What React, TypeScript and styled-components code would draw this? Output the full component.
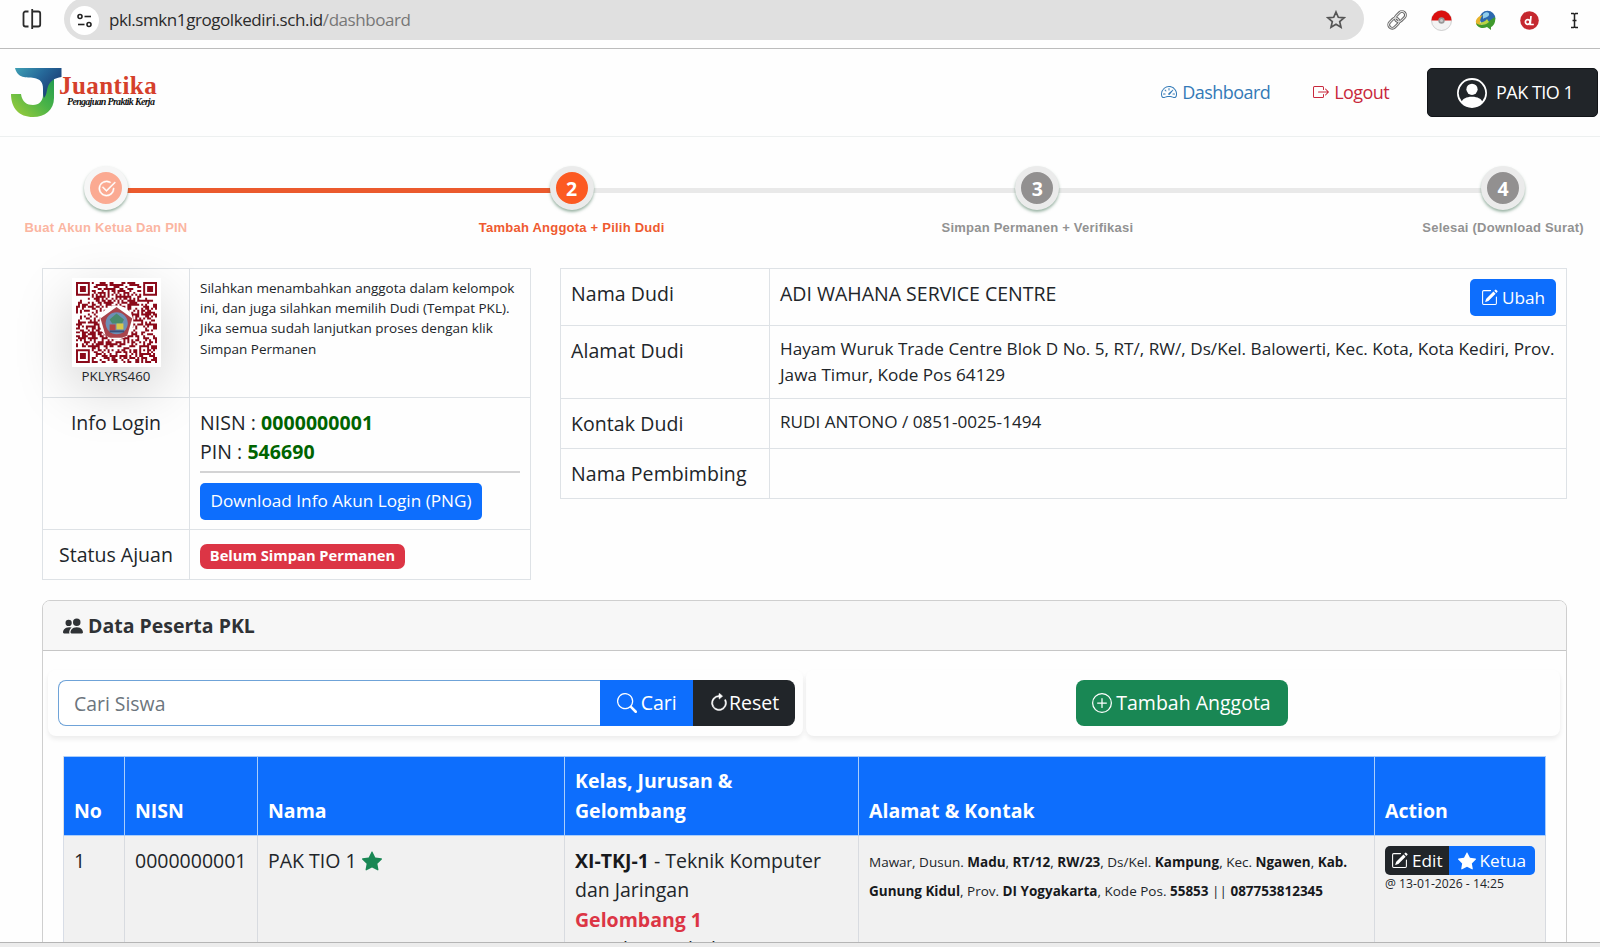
import React from 'react';
import styled, { createGlobalStyle, css } from 'styled-components';
import {
  BsSpeedometer2, BsBoxArrowRight, BsPersonCircle, BsPencilSquare, BsPeopleFill,
  BsSearch, BsArrowClockwise, BsPlusCircle, BsStarFill, BsCheck2Circle,
} from 'react-icons/bs';

const Global = createGlobalStyle`
  *, *::before, *::after { box-sizing: border-box; }
  body {
    margin: 0;
    background: #fefefe;
    color: #212529;
    font: 400 19.5px/29.3px "Open Sans", "Noto Sans", sans-serif;
    overflow: hidden;
  }
  svg { flex: none; display: block; }
`;

const Page = styled.div`
  width: 1600px;
  height: 947px;
  display: flex;
  flex-direction: column;
  overflow: hidden;
`;
const Viewport = styled.main`
  flex: 1;
  min-height: 0;
  overflow: hidden;
`;
const BottomEdge = styled.div`
  height: 5px;
  flex: none;
  background: #ececec;
  border-top: 1px solid #b5b5b5;
`;

/* Browser toolbar */
const BrowserBar = styled.div`
  height: 49px;
  flex: none;
  display: flex;
  align-items: flex-start;
  border-bottom: 1px solid #bcbcbc;
  overflow: hidden;
`;
const SplitSlot = styled.div`
  width: 64px;
  padding: 8px 0 0 22px;
`;
const UrlPill = styled.div`
  width: 1300px;
  height: 42px;
  margin-top: -2px;
  padding: 2px 18px 0 6px;
  display: flex;
  align-items: center;
  border-radius: 21px;
  background: #e0e0e0;
`;
const SiteBadge = styled.span`
  width: 29px;
  height: 29px;
  border-radius: 50%;
  background: #fff;
  display: grid;
  place-items: center;
`;
const Url = styled.span`
  flex: 1;
  margin-left: 10px;
  font: 17px/24px "Open Sans", sans-serif;
  letter-spacing: -0.43px;
  color: #2b2b2b;
  white-space: nowrap;
`;
const UrlPath = styled.span`
  color: #777;
`;
const Extensions = styled.div`
  height: 40px;
  padding-left: 22px;
  display: grid;
  grid-template-columns: repeat(5, 22px);
  gap: 22.3px;
  align-items: center;
  justify-items: center;
`;

/* Site header */
const Header = styled.header`
  height: 88px;
  padding: 0 2px 0 10px;
  display: flex;
  align-items: center;
  border-bottom: 1px solid #edf0f0;
`;
const Logo = styled.div`
  display: flex;
  align-items: flex-start;
  height: 51px;
  margin-right: auto;
`;
const LogoWords = styled.div`
  display: flex;
  flex-direction: column;
  margin-left: -5px;
  padding-top: 8px;
`;
const LogoName = styled.span`
  font: 700 25px/21px "Liberation Serif", serif;
  letter-spacing: 0.45px;
  color: #d5402b;
`;
const LogoTag = styled.span`
  margin-left: 8px;
  font: italic 700 10px/11px "Liberation Serif", serif;
  letter-spacing: -0.7px;
  color: #111;
  white-space: nowrap;
`;
const NavLink = styled.a<{ $color: string; $after: number }>`
  display: flex;
  align-items: center;
  gap: 5px;
  margin-right: ${p => p.$after}px;
  color: ${p => p.$color};
  font-size: 18px;
  letter-spacing: -0.57px;
`;
const UserButton = styled.button`
  width: 171px;
  height: 49px;
  padding: 0 0 0 29px;
  display: flex;
  align-items: center;
  gap: 9px;
  border: 1px solid #111418;
  border-radius: 5px;
  background: #212529;
  color: #fff;
  font: 18px/27px "Open Sans", sans-serif;
  letter-spacing: -0.5px;
  white-space: nowrap;
`;

/* Progress steps */
const Stepper = styled.ol`
  list-style: none;
  margin: 0;
  padding: 29px 0 0 6px;
  height: 131px;
  display: flex;
  align-items: flex-start;
`;
const Step = styled.li`
  flex: none;
  width: 200px;
  display: flex;
  flex-direction: column;
  align-items: center;
  z-index: 1;
`;
const StepCircle = styled.span<{ $color: string; $ring: string }>`
  width: 44px;
  height: 44px;
  border: 6.5px solid ${p => p.$ring};
  border-radius: 50%;
  background: ${p => p.$color};
  box-shadow: 0 2px 3px rgba(60, 110, 80, 0.5);
  color: #fff;
  display: grid;
  place-items: center;
  font: 700 19.5px/31px "Open Sans", sans-serif;
`;
const StepLabel = styled.span<{ $color: string }>`
  margin-top: 8px;
  color: ${p => p.$color};
  font: 700 13px/20px "Liberation Sans", Arial, sans-serif;
  letter-spacing: 0.23px;
  white-space: nowrap;
`;
const StepLine = styled.li<{ $done?: boolean }>`
  flex: none;
  width: 423.7px;
  height: 5px;
  margin: 22px -79px 0;
  background: ${p => (p.$done ? '#eb5a2d' : '#e9e9e9')};
`;

/* Information tables */
const InfoRow = styled.section`
  display: flex;
  align-items: flex-start;
  gap: 29px;
  padding: 0 33px 0 42px;
  height: 332px;
`;
const InfoTable = styled.div<{ $cols: string; $rows: string; $width: number }>`
  width: ${p => p.$width}px;
  display: grid;
  grid-template-columns: ${p => p.$cols};
  grid-template-rows: ${p => p.$rows};
  border: 1px solid #dee2e6;
  border-width: 1px 0 0 1px;
`;
const Cell = styled.div<{ $center?: boolean; $spacing?: number; $size?: number; $line?: number; $top?: number }>`
  border: 1px solid #dee2e6;
  border-width: 0 1px 1px 0;
  padding: ${p => p.$top ?? 10}px 10px 0;
  text-align: ${p => (p.$center ? 'center' : 'left')};
  letter-spacing: ${p => p.$spacing ?? 0}px;
  font-size: ${p => p.$size ?? 19.5}px;
  line-height: ${p => p.$line ?? 29.3}px;
  white-space: nowrap;
`;
const QrCell = styled(Cell)`
  display: flex;
  flex-direction: column;
  align-items: center;
  padding-top: 9px;
  font-size: 13.3px;
  line-height: 19px;
`;
const QrFrame = styled.span`
  padding: 4px;
  background: #fff;
  box-shadow: 0 20px 58px rgba(0, 0, 0, 0.18);
`;
const ValueCell = styled(Cell)`
  background: #fefefe;
  position: relative;
`;
const Green = styled.b`
  color: #006400;
`;
const Rule = styled.hr`
  margin: 4px 0 10px;
  border: 0;
  height: 2px;
  background: #d3d3d4;
`;
const Button = styled.button<{ $bg: string }>`
  display: inline-flex;
  align-items: center;
  justify-content: center;
  border: 0;
  padding: 0;
  border-radius: 5px;
  background: ${p => p.$bg};
  color: #fff;
  font: 17.2px/26px "Open Sans", sans-serif;
  white-space: nowrap;
`;
const DownloadButton = styled(Button)`
  width: 282px;
  height: 37px;
  display: flex;
`;
const EditDudiButton = styled(Button)`
  width: 86px;
  height: 37px;
  gap: 4px;
`;
const StatusBadge = styled.span`
  display: flex;
  align-items: center;
  justify-content: center;
  width: 205px;
  height: 25px;
  padding-bottom: 2px;
  border-radius: 7px;
  background: #dc3545;
  color: #fff;
  font: 700 14.7px/23px "Open Sans", sans-serif;
`;
const DudiName = styled(Cell)`
  display: flex;
  align-items: flex-start;
  justify-content: space-between;
`;

/* Participant card */
const Card = styled.section`
  margin: 0 33px 0 42px;
  height: 420px;
  border: 1px solid #cfcfcf;
  border-radius: 8px 8px 0 0;
`;
const CardTitle = styled.h2`
  height: 50px;
  margin: 0;
  padding-left: 20px;
  display: flex;
  align-items: center;
  gap: 5px;
  border-bottom: 1px solid #c6c6c6;
  border-radius: 7px 7px 0 0;
  background: #f7f7f7;
  color: #2f3235;
  font: 700 19.5px/29px "Open Sans", sans-serif;
`;
const Tools = styled.div`
  display: grid;
  grid-template-columns: 755px 754px;
  gap: 3px;
  padding: 19px 5px 0;
`;
const ToolPanel = styled.div<{ $center?: boolean }>`
  height: 66px;
  padding: ${p => (p.$center ? '10px 11px 10px 8px' : '10px 8px 10px 10px')};
  display: flex;
  justify-content: ${p => (p.$center ? 'center' : 'flex-start')};
  border-radius: 8px;
  box-shadow: 0 3px 5px rgba(0, 0, 0, 0.075);
`;
const SearchInput = styled.input`
  width: 543px;
  height: 46px;
  padding: 0 15px;
  border: 1px solid #6fa3d8;
  border-right: 0;
  border-radius: 8px 0 0 8px;
  background: #fff;
  font: 19.4px/28px "Open Sans", sans-serif;
  outline: none;
  &::placeholder { color: #6c757d; opacity: 1; }
`;
const ToolButton = styled(Button)<{ $width: number; $gap: number; $radius: string }>`
  width: ${p => p.$width}px;
  height: 46px;
  gap: ${p => p.$gap}px;
  border-radius: ${p => p.$radius};
  font-size: 19.5px;
`;

const Table = styled.div`
  margin: 20px 0 0 20px;
  width: 1483px;
  display: grid;
  grid-template-columns: 61px 133px 307px 294px 516px 171px;
  grid-template-rows: 80px 200px;
  border-left: 1px solid #d8dde6;
`;
const HeadCell = styled.div`
  display: flex;
  align-items: flex-end;
  padding: 0 10px 10px;
  border: 1px solid #a9cdfb;
  border-left: 0;
  background: #0d6efd;
  color: #fff;
  font-weight: 700;
  font-size: 19.5px;
`;
const BodyCell = styled.div<{ $small?: boolean }>`
  padding: ${p => (p.$small ? 12 : 10)}px 10px 0;
  border-right: 1px solid #d8dbe0;
  background: #f1f1f1;
  white-space: nowrap;
  ${p => p.$small && css`font-size: 13.5px;`}
`;
const NameCell = styled(BodyCell)`
  display: flex;
  gap: 5px;
`;
const NameStar = styled.span`
  padding-top: 5px;
  color: #198754;
`;
const Batch = styled.b`
  color: #dc3545;
  font-weight: 700;
`;
const Strong = styled.b`
  font-weight: 700;
  color: #17191c;
`;
const ButtonGroup = styled.div`
  display: flex;
`;
const GroupButton = styled(Button)<{ $width: number; $radius: string; $gap: number }>`
  width: ${p => p.$width}px;
  height: 29px;
  gap: ${p => p.$gap}px;
  border-radius: ${p => p.$radius};
`;
const Timestamp = styled.div`
  font-size: 12.2px;
  line-height: 18px;
`;

const N = 41;
const isDark = (x: number, y: number): boolean => {
  const finder = (cx: number, cy: number) => {
    const d = Math.max(Math.abs(x - cx), Math.abs(y - cy));
    return d > 4 ? null : d === 3 || d <= 1;
  };
  for (const [cx, cy] of [[3, 3], [N - 4, 3], [3, N - 4]]) {
    const f = finder(cx, cy);
    if (f !== null) return f;
  }
  const a = Math.max(Math.abs(x - 34), Math.abs(y - 34));
  if (a <= 2) return a !== 1;
  if (x === 6 || y === 6) return (x + y) % 2 === 0;
  const h = Math.imul(x * 73856093 ^ y * 19349663, 0x45d9f3b);
  return (((h ^ (h >>> 15)) >>> 3) & 1) === 1;
};
const qrPath = (() => {
  let d = '';
  for (let y = 0; y < N; y++) for (let x = 0; x < N; x++) if (isDark(x, y)) d += `M${x} ${y}h1v1h-1z`;
  return d;
})();

const QrCode = () => (
  <svg width="81" height="81" viewBox="0 0 41 41">
    <path d={qrPath} fill="#8b0a1a" />
    <circle cx="20.5" cy="20.5" r="8.6" fill="#fff" />
    <path d="M20.5 12.6l8 5.900-2.600 8.700-2.500 1h-6l-2.400-1-2.600-8.700z" fill="#a8444c" />
    <circle cx="20.6" cy="20.9" r="5.600" fill="#6c8fb5" />
    <path d="M17 19l3.500-3 3.800 3-1 2h-5z" fill="#4a8a6c" />
    <path d="M17 21.500h3v3h-3z" fill="#b54545" />
    <path d="M20.500 21h3.500v3h-3.500z" fill="#d8c94a" />
    <path d="M17 25h7.400" stroke="#39507c" strokeWidth="1" />
  </svg>
);

const LogoMark = () => (
  <svg width="54" height="51" viewBox="0 0 54 51">
    <defs>
      <linearGradient id="leaf" x1="0" y1="1" x2="1" y2="0">
        <stop offset="0" stopColor="#a5cf3a" />
        <stop offset="0.55" stopColor="#49b348" />
        <stop offset="1" stopColor="#1f9a50" />
      </linearGradient>
      <linearGradient id="wave" x1="0" y1="0" x2="1" y2="0.6">
        <stop offset="0" stopColor="#3fa0b4" />
        <stop offset="0.5" stopColor="#26699a" />
        <stop offset="1" stopColor="#1b3a72" />
      </linearGradient>
    </defs>
    <path d="M1 27h10c1 8 6 11 12 11 6 0 10-4 10-10V17l11-8v22c0 12-9 19-21 19C9 50 1 41 1 27z" fill="url(#leaf)" />
    <path d="M5 1h46.500v9c-7 1-12 4-14 11-1 4-1 7-3.500 10-1-3-1-5-1-9 0-7-3-10-9-11-8-1-16 1-19-10z" fill="url(#wave)" />
  </svg>
);

const SplitIcon = () => (
  <svg width="20" height="22" viewBox="0 0 20 22" fill="none" stroke="#2b2b2b" strokeWidth="1.800">
    <path d="M6.500 3.500H3.500a2 2 0 0 0-2 2v11a2 2 0 0 0 2 2h3" />
    <path d="M10.200 1v20M10.200 3.500h6a2 2 0 0 1 2 2v11a2 2 0 0 1-2 2h-6" />
  </svg>
);
const TuneIcon = () => (
  <svg width="17" height="15" viewBox="0 0 17 15" fill="none" stroke="#222" strokeWidth="1.600">
    <circle cx="4" cy="3.500" r="2" /><path d="M8.500 3.500H15" />
    <circle cx="13" cy="11.500" r="2" /><path d="M2 11.500h6.500" />
  </svg>
);
const BookmarkStar = () => (
  <svg width="20" height="20" viewBox="0 0 20 20" fill="none" stroke="#555" strokeWidth="1.700">
    <path d="M10 2l2.300 5.300 5.700.5-4.300 3.800 1.300 5.700-5-3-5 3 1.300-5.700L2 7.800l5.700-.5z" />
  </svg>
);
const ChainIcon = () => (
  <svg width="22" height="22" viewBox="0 0 22 22" fill="none">
    <g stroke="#5c5c5c" strokeWidth="2.800" transform="rotate(-45 11 11)">
      <rect x="0.800" y="7.500" width="11.500" height="7" rx="3.500" /><rect x="10" y="7.500" width="11.500" height="7" rx="3.500" />
    </g>
    <g stroke="#e2e2e2" strokeWidth="1.100" transform="rotate(-45 11 11)">
      <rect x="0.800" y="7.500" width="11.500" height="7" rx="3.500" /><rect x="10" y="7.500" width="11.500" height="7" rx="3.500" />
    </g>
  </svg>
);
const BallIcon = () => (
  <svg width="21" height="21" viewBox="0 0 21 21">
    <circle cx="10.500" cy="10.500" r="10" fill="#f3f3f3" stroke="#bbb" strokeWidth="0.700" />
    <path d="M.5 10.500a10 10 0 0 1 20 0z" fill="#d9100f" />
    <circle cx="10.500" cy="10.500" r="3.200" fill="#999" /><circle cx="10.500" cy="10.500" r="1.500" fill="#ccc" />
  </svg>
);
const GlobeIcon = () => (
  <svg width="21" height="21" viewBox="0 0 21 21">
    <circle cx="12.500" cy="8.500" r="7.800" fill="#2c68ae" />
    <path d="M8 4c3-3 7-2 6 1s-5 2-6 4z" fill="#8fcdec" />
    <path d="M8 5C2 6-1 12 2 15c2 2 7 2 11 0-5 1-8 0-8-3s1-5 3-7z" fill="#e8b32c" />
    <path d="M1 13c3 3 9 2 13-2l6-4c1 4-1 9-4 10v3l-4-3c-4 2-10 1-11-4z" fill="#3f9a2c" />
    <path d="M3 12c3 1 7 0 9-3l2 3c-3 3-8 4-11 0z" fill="#b9d445" />
  </svg>
);
const DiscIcon = () => (
  <svg width="19" height="19" viewBox="0 0 19 19" fill="none">
    <circle cx="9.500" cy="9.500" r="9.300" fill="#c5282f" />
    <circle cx="7.700" cy="11" r="2.300" stroke="#fff" strokeWidth="1.700" />
    <path d="M11 5l-.8 8.500h3.600" stroke="#fff" strokeWidth="1.700" />
  </svg>
);
const CursorIcon = () => (
  <svg width="9" height="17" viewBox="0 0 9 17" fill="none" stroke="#222" strokeWidth="1.500">
    <path d="M1 1.500h2.500l1 1 1-1H8M4.500 2v13M1 15.500h2.500l1-1 1 1H8M2.500 8.500h4" />
  </svg>
);

const Address = () => (
  <>
    Mawar, Dusun. <Strong>Madu</Strong>, <Strong>RT/12</Strong>, <Strong>RW/23</Strong>, Ds/Kel. <Strong>Kampung</Strong>, Kec.{' '}
    <Strong>Ngawen</Strong>, <Strong>Kab.</Strong><br />
    <Strong>Gunung Kidul</Strong>, Prov. <Strong>DI Yogyakarta</Strong>, Kode Pos. <Strong>55853</Strong> || <Strong>087753812345</Strong>
  </>
);

export default function App() {
  return (
    <Page>
      <Global />
      <BrowserBar>
        <SplitSlot><SplitIcon /></SplitSlot>
        <UrlPill>
          <SiteBadge><TuneIcon /></SiteBadge>
          <Url>pkl.smkn1grogolkediri.sch.id<UrlPath>/dashboard</UrlPath></Url>
          <BookmarkStar />
        </UrlPill>
        <Extensions>
          <ChainIcon /><BallIcon /><GlobeIcon /><DiscIcon /><CursorIcon />
        </Extensions>
      </BrowserBar>
      <Viewport>
        <Header>
          <Logo>
            <LogoMark />
            <LogoWords>
              <LogoName>Juantika</LogoName>
              <LogoTag>Pengajuan Praktik Kerja</LogoTag>
            </LogoWords>
          </Logo>
          <NavLink $color="#337ab7" $after={43}><BsSpeedometer2 size={16} />Dashboard</NavLink>
          <NavLink $color="#c8283c" $after={38}><BsBoxArrowRight size={16} />Logout</NavLink>
          <UserButton><BsPersonCircle size={30} />PAK TIO 1</UserButton>
        </Header>
        <Stepper>
          <Step>
            <StepCircle $color="#fbaa92" $ring="#f6f6f6"><BsCheck2Circle size={19} stroke="#fff" strokeWidth={0.4} /></StepCircle>
            <StepLabel $color="#fbb5a1">Buat Akun Ketua Dan PIN</StepLabel>
          </Step>
          <StepLine $done />
          <Step>
            <StepCircle $color="#fc5a22" $ring="#ebebeb">2</StepCircle>
            <StepLabel $color="#ef5a30">Tambah Anggota + Pilih Dudi</StepLabel>
          </Step>
          <StepLine />
          <Step>
            <StepCircle $color="#929090" $ring="#ebebeb">3</StepCircle>
            <StepLabel $color="#929292">Simpan Permanen + Verifikasi</StepLabel>
          </Step>
          <StepLine />
          <Step>
            <StepCircle $color="#929090" $ring="#ebebeb">4</StepCircle>
            <StepLabel $color="#929292">Selesai (Download Surat)</StepLabel>
          </Step>
        </Stepper>
        <InfoRow>
          <InfoTable $width={489} $cols="147px 341px" $rows="129px 132px 50px">
            <QrCell><QrFrame><QrCode /></QrFrame>PKLYRS460</QrCell>
            <ValueCell $size={13.5} $line={20.2} $top={9}>
              Silahkan menambahkan anggota dalam kelompok<br />
              ini, dan juga silahkan memilih Dudi (Tempat PKL).<br />
              Jika semua sudah lanjutkan proses dengan klik<br />
              Simpan Permanen
            </ValueCell>
            <Cell $center>Info Login</Cell>
            <ValueCell $spacing={0.05}>
              NISN : <Green>0000000001</Green><br />PIN : <Green>546690</Green>
              <Rule />
              <DownloadButton $bg="#0d6efd">Download Info Akun Login (PNG)</DownloadButton>
            </ValueCell>
            <Cell $center>Status Ajuan</Cell>
            <ValueCell $top={14}><StatusBadge>Belum Simpan Permanen</StatusBadge></ValueCell>
          </InfoTable>
          <InfoTable $width={1007} $cols="209px 797px" $rows="57px 73px 50px 50px">
            <Cell $spacing={0.07}>Nama Dudi</Cell>
            <DudiName>
              ADI WAHANA SERVICE CENTRE
              <EditDudiButton $bg="#0d6efd"><BsPencilSquare size={17} />Ubah</EditDudiButton>
            </DudiName>
            <Cell $spacing={0.07}>Alamat Dudi</Cell>
            <Cell $size={17.15} $line={26.4}>
              Hayam Wuruk Trade Centre Blok D No. 5, RT/, RW/, Ds/Kel. Balowerti, Kec. Kota, Kota Kediri, Prov.<br />
              Jawa Timur, Kode Pos 64129
            </Cell>
            <Cell $spacing={0.07}>Kontak Dudi</Cell>
            <Cell $size={17.15} $line={26.4}>RUDI ANTONO / 0851-0025-1494</Cell>
            <Cell $spacing={0.07}>Nama Pembimbing</Cell>
            <Cell />
          </InfoTable>
        </InfoRow>
        <Card>
          <CardTitle><BsPeopleFill size={20} />Data Peserta PKL</CardTitle>
          <Tools>
            <ToolPanel>
              <SearchInput placeholder="Cari Siswa" />
              <ToolButton $bg="#0d6efd" $width={93} $gap={4} $radius="0"><BsSearch size={20} />Cari</ToolButton>
              <ToolButton $bg="#212529" $width={102} $gap={0} $radius="0 8px 8px 0">
                <BsArrowClockwise size={20} stroke="#fff" strokeWidth={0.4} />Reset
              </ToolButton>
            </ToolPanel>
            <ToolPanel $center>
              <ToolButton $bg="#198754" $width={212} $gap={4} $radius="8px"><BsPlusCircle size={20} />Tambah Anggota</ToolButton>
            </ToolPanel>
          </Tools>
          <Table>
            <HeadCell>No</HeadCell>
            <HeadCell>NISN</HeadCell>
            <HeadCell>Nama</HeadCell>
            <HeadCell>Kelas, Jurusan &amp;<br />Gelombang</HeadCell>
            <HeadCell>Alamat &amp; Kontak</HeadCell>
            <HeadCell>Action</HeadCell>
            <BodyCell>1</BodyCell>
            <BodyCell>0000000001</BodyCell>
            <NameCell>PAK TIO 1<NameStar><BsStarFill size={20} /></NameStar></NameCell>
            <BodyCell>
              <Strong>XI-TKJ-1</Strong> - Teknik Komputer<br />dan Jaringan<br /><Batch>Gelombang 1</Batch><br />Gemilang Tabel
            </BodyCell>
            <BodyCell $small><Address /></BodyCell>
            <BodyCell>
              <ButtonGroup>
                <GroupButton $bg="#212529" $width={64} $gap={4} $radius="5px 0 0 5px"><BsPencilSquare size={17} />Edit</GroupButton>
                <GroupButton $bg="#0d6efd" $width={87} $gap={4} $radius="0 5px 5px 0"><BsStarFill size={18} />Ketua</GroupButton>
              </ButtonGroup>
              <Timestamp>@ 13-01-2026 - 14:25</Timestamp>
            </BodyCell>
          </Table>
        </Card>
      </Viewport>
      <BottomEdge />
    </Page>
  );
}
